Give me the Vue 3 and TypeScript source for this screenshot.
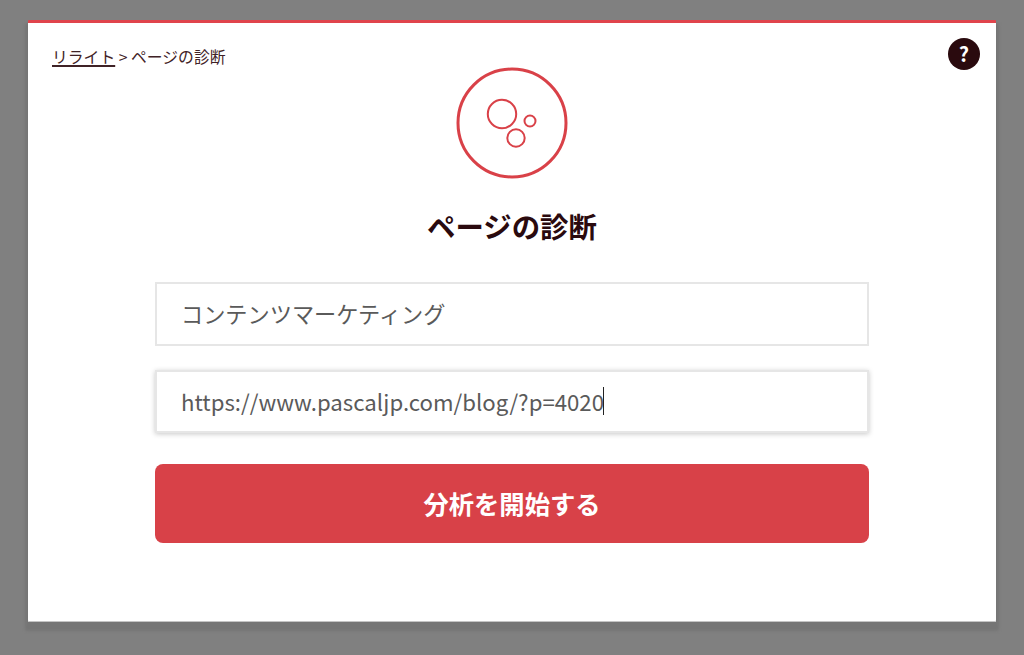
<template>
  <div class="overlay">
    <section class="modal">
      <header class="top">
        <nav class="crumbs"><a href="#" class="crumb-link">リライト</a> &gt; ページの診断</nav>
        <button class="help" type="button">?</button>
      </header>

      <div class="body">
        <svg class="logo" width="112" height="112" viewBox="0 0 112 112" fill="none" stroke="#d94148">
          <circle cx="56" cy="56" r="54" stroke-width="3" />
          <circle cx="46" cy="47" r="14.2" stroke-width="2" />
          <circle cx="74" cy="54" r="5.5" stroke-width="2" />
          <circle cx="60" cy="71" r="8.7" stroke-width="2" />
        </svg>
        <h1 class="title">{{ title }}</h1>

        <form class="form" @submit.prevent>
          <div class="field">{{ keyword }}</div>
          <div class="field focused">{{ url }}<span class="caret"></span></div>
          <button class="submit" type="submit">分析を開始する</button>
        </form>
      </div>
    </section>
  </div>
</template>

<script setup lang="ts">
const title = 'ページの診断'
const keyword = 'コンテンツマーケティング'
const url = 'https://www.pascaljp.com/blog/?p=4020'
</script>

<style>
html,
body {
  margin: 0;
  background: #808080;
}
</style>

<style scoped>
.overlay {
  box-sizing: border-box;
  width: 1024px;
  height: 655px;
  padding: 20px 28px 33px;
  background: #808080;
  font-family: "Noto Sans CJK JP", "Noto Sans", sans-serif;
  color: #2a0a0e;
}

.modal {
  box-sizing: border-box;
  height: 602px;
  background: #fff;
  border-top: 3px solid #e0444c;
  border-radius: 1px;
  box-shadow: inset 0 -1px 0 #c4c4c4, 0 6px 3px 3px #757575;
  position: relative;
}

.top {
  display: flex;
  justify-content: space-between;
  align-items: flex-start;
  padding: 15px 16px 0 24px;
}

.crumbs {
  font-size: 15.8px;
  line-height: 37px;
  color: #3f2226;
}

.crumb-link {
  color: inherit;
  text-decoration: underline;
  text-decoration-thickness: 1.5px;
  text-underline-offset: 2px;
}

.help {
  width: 32px;
  height: 32px;
  padding: 0;
  border: 0;
  border-radius: 50%;
  background: #2a0a0e;
  color: #fff;
  font: 700 20px/32px "Noto Sans CJK JP", sans-serif;
}

.body {
  position: absolute;
  top: 44px;
  left: 0;
  right: 0;
  display: flex;
  flex-direction: column;
  align-items: center;
}

.logo {
  display: block;
}

.title {
  margin: 12px 0 0;
  font-size: 28.4px;
  line-height: 70px;
  font-weight: 700;
}

.form {
  width: 714px;
  display: flex;
  flex-direction: column;
  margin-top: 21px;
}

.field {
  box-sizing: border-box;
  height: 64px;
  padding: 0 24px 2px;
  display: flex;
  align-items: center;
  border: 2px solid #e6e6e6;
  background: #fff;
  font-size: 22.2px;
  color: #5a5a5a;
  line-height: 58px;
}

.field + .field {
  margin-top: 24px;
  height: 63px;
}

.focused {
  box-shadow: 0 1px 5px rgba(0, 0, 0, 0.22);
}

.caret {
  display: inline-block;
  width: 1px;
  height: 28px;
  margin-left: -1px;
  background: #222;
}

.submit {
  height: 79px;
  margin-top: 31px;
  padding-bottom: 2px;
  border: 0;
  border-radius: 8px;
  background: #d84148;
  color: #fff;
  font: 700 25.3px "Noto Sans CJK JP", sans-serif;
  cursor: pointer;
}
</style>
